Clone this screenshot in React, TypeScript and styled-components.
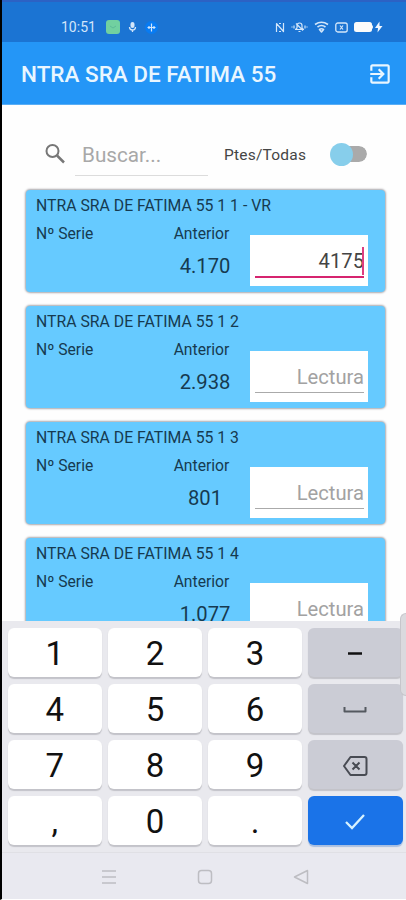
import React from "react";
import styled, { createGlobalStyle } from "styled-components";

const GlobalStyle = createGlobalStyle`
  * { box-sizing: border-box; }
  html, body { margin: 0; padding: 0; background: #fefefe; }
  body { font-family: Roboto, "Liberation Sans", sans-serif; }
`;

const Screen = styled.div`
  width: 406px;
  height: 900px;
  overflow: hidden;
  display: flex;
  flex-direction: column;
  border-left: 2px solid #000;
  border-bottom: 1px solid #fff;
  background: #fefefe;
`;

const StatusBar = styled.header`
  flex: none;
  height: 42px;
  border-top: 2px solid #2c62c4;
  background: #1b74d3;
  color: #d3e6fa;
  display: flex;
  align-items: center;
  padding: 10px 23px 0 59px;
`;

const Clock = styled.span`
  width: 36px;
  margin-right: 9px;
  font-size: 14px;
  line-height: 16px;
  letter-spacing: 0;
  white-space: nowrap;
`;

const StatusGroup = styled.div<{ $gap: number; $end?: boolean }>`
  display: flex;
  align-items: center;
  gap: ${(p) => p.$gap}px;
  margin-left: ${(p) => (p.$end ? "auto" : "0")};
`;

const AppBar = styled.div`
  flex: none;
  height: 63px;
  display: flex;
  align-items: center;
  justify-content: space-between;
  padding: 2px 13px 0 19px;
  background: #2496f7;
  border-bottom: 1px solid #5aaef5;
  color: #e9f6ff;
`;

const AppTitle = styled.h1`
  margin: 0;
  font-size: 22.5px;
  font-weight: 500;
  line-height: 28px;
  white-space: nowrap;
`;

const IconButton = styled.button`
  display: flex;
  padding: 0;
  border: 0;
  background: none;
  color: inherit;
`;

const Main = styled.main`
  flex: 1;
  min-height: 0;
  overflow: hidden;
`;

const Filters = styled.div`
  height: 84px;
  display: flex;
  align-items: flex-start;
  padding: 29px 17px 0 42px;
`;

const SearchField = styled.label`
  display: flex;
  width: 164px;
  gap: 9px;
  padding-top: 9px;
  color: #777;
`;

const SearchInput = styled.span`
  flex: 1;
  height: 33px;
  padding-left: 7px;
  border-bottom: 1px solid #dcdcdc;
  font-size: 20.7px;
  line-height: 25px;
  color: #a8a8a8;
`;

const SwitchLabel = styled.span`
  width: 84px;
  margin: 6px 22px 0 16px;
  font-size: 15.5px;
  letter-spacing: 0.2px;
  line-height: 30px;
  color: #454545;
  white-space: nowrap;
`;

const Switch = styled.span`
  display: flex;
  align-items: center;
  width: 37px;
  height: 16px;
  margin-top: 12px;
  border-left: 10px solid transparent;
  border-radius: 8px;
  background: #aaa;
  background-clip: padding-box;
`;

const Thumb = styled.span`
  flex: none;
  width: 23px;
  height: 23px;
  margin-left: -10px;
  border-radius: 50%;
  background: #87ceeb;
`;

const CardList = styled.div`
  display: flex;
  flex-direction: column;
  gap: 14px;
  padding: 1px 21px 0 24px;
`;

const Card = styled.article`
  flex: none;
  height: 102px;
  padding: 7px 16px 0 10px;
  border-radius: 4px;
  background: #66caff;
  box-shadow: 0 0 2px 1px #aaa8ad;
  color: #163a50;
`;

const CardTitle = styled.h2`
  margin: 0;
  font-size: 15.8px;
  font-weight: 400;
  line-height: 18px;
  white-space: nowrap;
`;

const CardBody = styled.div`
  display: grid;
  grid-template-columns: 117px 97px 118px;
  white-space: nowrap;
`;

const Column = styled.div<{ $center?: boolean }>`
  display: flex;
  flex-direction: column;
  align-items: ${(p) => (p.$center ? "center" : "flex-start")};
`;

const ColumnLabel = styled.span`
  padding-top: 10px;
  font-size: 15.7px;
  line-height: 18px;
`;

const Previous = styled.span`
  padding: 11px 0 0 7px;
  font-size: 20.2px;
  line-height: 24px;
`;

const ReadingBox = styled.div`
  align-self: start;
  height: 51px;
  margin-top: 20px;
  padding: 8px 4px 0 5px;
  background: #fff;
`;

const ReadingInput = styled.div<{ $active?: boolean }>`
  display: flex;
  justify-content: flex-end;
  align-items: center;
  height: ${(p) => (p.$active ? 35 : 34)}px;
  padding-top: 2px;
  border-bottom: ${(p) => (p.$active ? "2px solid #d6246f" : "1.5px solid #aaa")};
  color: ${(p) => (p.$active ? "#444" : "#a2a2a2")};
  font-size: 20.2px;
`;

const Caret = styled.span`
  width: 2px;
  height: 28px;
  margin-left: -2px;
  background: #dd3d80;
`;

const Keyboard = styled.section`
  flex: none;
  position: relative;
  height: 231px;
  padding: 7px 3px 0 5.5px;
  background: #e9e9ee;
`;

const Keys = styled.div`
  display: grid;
  grid-template-columns: repeat(4, 94.5px);
  grid-auto-rows: 49px;
  gap: 7px 5.7px;
`;

const Key = styled.button<{ $tone?: "grey" | "blue" }>`
  display: flex;
  align-items: center;
  justify-content: center;
  padding: 2px 0 0;
  border: 0;
  border-radius: 6px;
  font: 400 33px/40px Roboto, sans-serif;
  color: #111;
  background: ${(p) =>
    p.$tone === "blue" ? "#1a73e8" : p.$tone === "grey" ? "#cbccd5" : "#fff"};
  box-shadow: 0 1.5px 1px ${(p) => (p.$tone === "blue" ? "#a9bfe0" : "#c3c3c9")};
`;

const EdgeHandle = styled.span`
  position: absolute;
  top: -8px;
  right: 0;
  width: 6px;
  height: 83px;
  border: 1px solid #c6c6cb;
  border-right: 0;
  border-radius: 6px 0 0 6px;
  background: #dadade;
`;

const NavBar = styled.nav`
  flex: none;
  height: 47px;
  display: flex;
  align-items: center;
  gap: 80px;
  padding: 2px 0 0 98.5px;
  border-top: 1px solid #e0e0e5;
  background: #e9e9f0;
  color: #bdbdc2;
`;

const Glyph = ({ w, h, box, children }: { w: number; h: number; box: string; children: React.ReactNode }) => (
  <svg width={w} height={h} viewBox={box} fill="none" stroke="currentColor" strokeLinejoin="round">
    {children}
  </svg>
);

const readings = [
  { name: "NTRA SRA DE FATIMA 55 1 1 - VR", previous: "4.170", current: "4175" },
  { name: "NTRA SRA DE FATIMA 55 1 2", previous: "2.938" },
  { name: "NTRA SRA DE FATIMA 55 1 3", previous: "801" },
  { name: "NTRA SRA DE FATIMA 55 1 4", previous: "1.077" },
];

const ReadingCard = ({ name, previous, current }: { name: string; previous: string; current?: string }) => (
  <Card>
    <CardTitle>{name}</CardTitle>
    <CardBody>
      <Column>
        <ColumnLabel>Nº Serie</ColumnLabel>
      </Column>
      <Column $center>
        <ColumnLabel>Anterior</ColumnLabel>
        <Previous>{previous}</Previous>
      </Column>
      <ReadingBox>
        <ReadingInput $active={!!current}>
          {current ?? "Lectura"}
          {current && <Caret />}
        </ReadingInput>
      </ReadingBox>
    </CardBody>
  </Card>
);

export default function App() {
  return (
    <>
      <GlobalStyle />
      <Screen>
        <StatusBar>
          <Clock>10:51</Clock>
          <StatusGroup $gap={8}>
            <Glyph w={14} h={14} box="0 0 14 14">
              <rect width="14" height="14" rx="3" fill="#71d0a0" stroke="none" />
              <path d="M4 6l3 2 3-2" stroke="#5dbb98" />
            </Glyph>
            <Glyph w={9} h={12} box="0 0 9 12">
              <rect x="2.500" y="1" width="4" height="6" rx="2" fill="currentColor" stroke="none" />
              <path d="M1.500 6a3 3 0 0 0 6 0M4.500 9v2" strokeWidth="1.3" />
            </Glyph>
            <Glyph w={13} h={13} box="0 0 13 13">
              <circle cx="6.500" cy="6.500" r="6.500" fill="#087bf2" stroke="none" />
              <path d="M6.500 2.500v8M4 5v3M9 5v3M2.500 6.500h8" strokeWidth="1.2" />
            </Glyph>
          </StatusGroup>
          <StatusGroup $gap={6} $end>
            <Glyph w={10} h={11} box="0 0 10 11">
              <path d="M1.500 10V1.500l7 8V1M4 1.500h2M4 9.500h2" strokeWidth="1.2" />
            </Glyph>
            <Glyph w={17} h={12} box="0 0 17 12">
              <path d="M4.500 8.500L6 7V4.500a2.500 2.500 0 0 1 5 0V7l1.500 1.500zM7.500 10.500h2M3 4.500v3M14 4.500v3M1 5.500v1M16 5.500v1M5 2.500l7 7" strokeWidth="1.2" />
            </Glyph>
            <Glyph w={15} h={12} box="0 0 15 12">
              <path d="M1 3.500q6.500-4.500 13 0M3.500 6q4-3 8 0M5.500 8.500q2-1.500 4 0L7.500 11z" strokeWidth="1.6" />
            </Glyph>
            <Glyph w={13} h={11} box="0 0 13 11">
              <rect x=".8" y="1" width="11.400" height="9" rx="2" strokeWidth="1.3" />
              <path d="M5 3.500l3 4M8 3.500l-3 4" strokeWidth="1.2" />
            </Glyph>
            <Glyph w={29} h={12} box="0 0 29 12">
              <rect x="0" y="1" width="18" height="10" rx="2.500" fill="#fbfbfa" stroke="none" />
              <path d="M18.500 4.500v3" stroke="#dceaf8" />
              <path d="M25.500.5L21 7h3l-.5 4.500L28.500 5h-3z" fill="#eef6ff" stroke="none" />
            </Glyph>
          </StatusGroup>
        </StatusBar>
        <AppBar>
          <AppTitle>NTRA SRA DE FATIMA 55</AppTitle>
          <IconButton aria-label="Salir">
            <svg width="26" height="26" viewBox="0 0 24 24" fill="currentColor">
              <path d="M10.090 15.590L11.500 17l5-5-5-5-1.410 1.410L12.670 11H3v2h9.670l-2.580 2.590zM19 3H5c-1.110 0-2 .9-2 2v4h2V5h14v14H5v-4H3v4c0 1.100.89 2 2 2h14c1.100 0 2-.9 2-2V5c0-1.100-.9-2-2-2z" />
            </svg>
          </IconButton>
        </AppBar>
        <Main>
          <Filters>
            <SearchField>
              <Glyph w={22} h={22} box="0 0 22 22">
                <circle cx="8.500" cy="8" r="6" strokeWidth="2" />
                <path d="M13 12.500l7 7" strokeWidth="2.500" />
              </Glyph>
              <SearchInput>Buscar...</SearchInput>
            </SearchField>
            <SwitchLabel>Ptes/Todas</SwitchLabel>
            <Switch>
              <Thumb />
            </Switch>
          </Filters>
          <CardList>
            {readings.map((r) => (
              <ReadingCard key={r.name} {...r} />
            ))}
          </CardList>
        </Main>
        <Keyboard>
          <Keys>
            <Key>1</Key>
            <Key>2</Key>
            <Key>3</Key>
            <Key $tone="grey">
              <Glyph w={16} h={4} box="0 0 16 4">
                <path d="M1 1.500h14" stroke="#111" strokeWidth="2.500" />
              </Glyph>
            </Key>
            <Key>4</Key>
            <Key>5</Key>
            <Key>6</Key>
            <Key $tone="grey">
              <Glyph w={24} h={8} box="0 0 24 8">
                <path d="M1.500 1v4.500h21V1" stroke="#555960" strokeWidth="2" />
              </Glyph>
            </Key>
            <Key>7</Key>
            <Key>8</Key>
            <Key>9</Key>
            <Key $tone="grey">
              <Glyph w={26} h={22} box="0 0 26 22">
                <path d="M8.500 2h14q2 0 2 2v14q0 2-2 2h-14L2 11zM10.500 7.500l7 7M17.500 7.500l-7 7" stroke="#484b53" strokeWidth="2" />
              </Glyph>
            </Key>
            <Key>,</Key>
            <Key>0</Key>
            <Key>.</Key>
            <Key $tone="blue">
              <Glyph w={22} h={18} box="0 0 22 18">
                <path d="M2 9l6 6L20 2" stroke="#d6f2ff" strokeWidth="2.300" strokeLinejoin="miter" />
              </Glyph>
            </Key>
          </Keys>
          <EdgeHandle />
        </Keyboard>
        <NavBar>
          <Glyph w={16} h={16} box="0 0 16 16">
            <path d="M1 2h14M1 8h14M1 14h14" strokeWidth="1.500" />
          </Glyph>
          <Glyph w={16} h={16} box="0 0 16 16">
            <rect x="1.500" y="1.500" width="13" height="13" rx="3" strokeWidth="1.500" />
          </Glyph>
          <Glyph w={16} h={16} box="0 0 16 16">
            <path d="M14.500 1.500v13L1.500 8z" strokeWidth="1.500" />
          </Glyph>
        </NavBar>
      </Screen>
    </>
  );
}
